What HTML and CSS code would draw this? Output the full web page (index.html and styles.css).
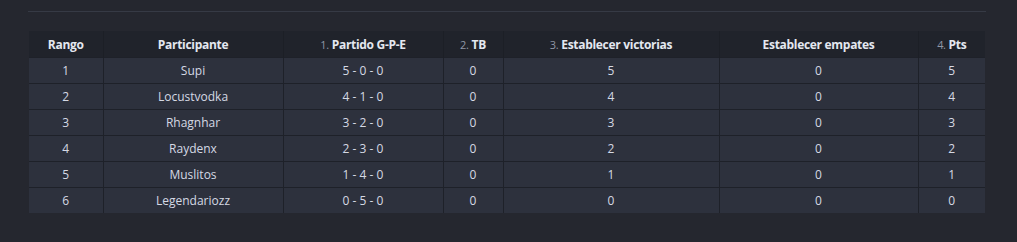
FILE: index.html
```html
<!DOCTYPE html>
<html>
<head>
<meta charset="utf-8">
<link rel="stylesheet" href="styles.css">
</head>
<body>
<div class="wrap">
  <hr class="sep">
  <table class="standings">
    <colgroup>
      <col class="c1"><col class="c2"><col class="c3"><col class="c4"><col class="c5"><col class="c6"><col class="c7">
    </colgroup>
    <thead>
      <tr>
        <th>Rango</th>
        <th>Participante</th>
        <th><span class="n">1.</span> Partido G-P-E</th>
        <th><span class="n">2.</span> TB</th>
        <th><span class="n">3.</span> Establecer victorias</th>
        <th>Establecer empates</th>
        <th><span class="n">4.</span> Pts</th>
      </tr>
    </thead>
    <tbody>
      <tr><td>1</td><td>Supi</td><td>5 - 0 - 0</td><td>0</td><td>5</td><td>0</td><td>5</td></tr>
      <tr><td>2</td><td>Locustvodka</td><td>4 - 1 - 0</td><td>0</td><td>4</td><td>0</td><td>4</td></tr>
      <tr><td>3</td><td>Rhagnhar</td><td>3 - 2 - 0</td><td>0</td><td>3</td><td>0</td><td>3</td></tr>
      <tr><td>4</td><td>Raydenx</td><td>2 - 3 - 0</td><td>0</td><td>2</td><td>0</td><td>2</td></tr>
      <tr><td>5</td><td>Muslitos</td><td>1 - 4 - 0</td><td>0</td><td>1</td><td>0</td><td>1</td></tr>
      <tr><td>6</td><td>Legendariozz</td><td>0 - 5 - 0</td><td>0</td><td>0</td><td>0</td><td>0</td></tr>
    </tbody>
  </table>
</div>
</body>
</html>
```
FILE: styles.css
```css
html, body {
  margin: 0;
  padding: 0;
  background: #25272f;
  height: 100%;
}
body {
  font-family: "Open Sans", "Noto Sans", sans-serif;
  color: #d5d9e4;
}
.wrap {
  padding: 11px 31px 0 28px;
}
.sep {
  margin: 0;
  border: 0;
  height: 1px;
  background: #363a45;
}
.standings {
  margin: 19px 0 0 1px;
  width: 956px;
  border-collapse: collapse;
  table-layout: fixed;
  font-size: 12px;
}
.c1 { width: 74px; }
.c2 { width: 180px; }
.c3 { width: 160px; }
.c4 { width: 60px; }
.c5 { width: 216px; }
.c6 { width: 199px; }
.c7 { width: 67px; }
.standings th {
  background: #20232b;
  height: 26px;
  padding: 0;
  font-weight: 700;
  color: #e4e8f0;
  text-align: center;
  letter-spacing: -0.3px;
  border-left: 1px solid #1c1f26;
}
.standings th:first-child { border-left: 0; }
.standings .n {
  color: #8f96a6;
  font-weight: 400;
  font-size: 11px;
}
.standings td {
  background: #2d313d;
  height: 25px;
  padding: 0;
  text-align: center;
  border: 1px solid #1e2129;
  color: #d5d9e4;
}
.standings tbody tr:last-child td { border-bottom: 0; }
.standings td:first-child { border-left: 0; }
.standings td:last-child { border-right: 0; }
```
